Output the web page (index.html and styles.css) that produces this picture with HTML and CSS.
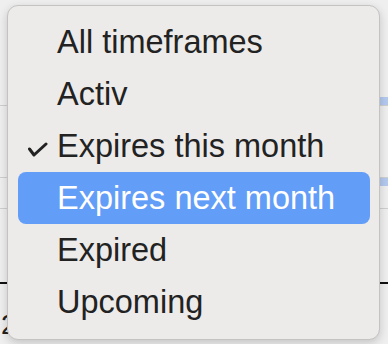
FILE: index.html
```html
<!DOCTYPE html>
<html lang="en">
<head>
    <meta charset="UTF-8">
    <title>Timeframe menu</title>
    <link rel="stylesheet" href="styles.css">
</head>
<body>
<div class="page">
    <div class="gap g1"></div>
    <div class="band"><span class="mark"></span></div>
    <div class="rule"></div>
    <div class="gap g2"></div>
    <div class="band b2"><span class="mark"></span></div>
    <div class="gap g3"></div>
    <div class="rule"></div>
    <div class="gap g4"></div>
    <div class="rule dark"></div>
    <div class="num">2</div>
</div>

<ul class="menu">
    <li class="item"><span class="slot"></span>All timeframes</li>
    <li class="item"><span class="slot"></span>Activ</li>
    <li class="item"><span class="slot"><svg class="check" width="20" height="15" viewBox="0 0 20 15"><path d="M1.5 7 L6 13 L18 2" fill="none" stroke="#222" stroke-width="3" stroke-linecap="round" stroke-linejoin="round"/></svg></span>Expires this month</li>
    <li class="item hover"><span class="slot"></span>Expires next month</li>
    <li class="item"><span class="slot"></span>Expired</li>
    <li class="item"><span class="slot"></span>Upcoming</li>
</ul>
</body>
</html>
```

FILE: styles.css
```css
body,div,ul,li{margin:0;padding:0;}
ul{list-style-type:none;}
body{background:#efefef;font-family:"Liberation Sans",Arial,sans-serif;overflow:hidden;}
.page{position:relative;width:388px;height:344px;}
.gap{height:10px;}
.g1{height:97px;}
.g2{height:71px;}
.g3{height:22px;}
.g4{height:73px;}
.band{height:8px;display:flex;justify-content:flex-end;}
.band .mark{width:40px;background:#b3c9ee;}
.b2{border-top:1px solid #cfcfcf;}
.rule{height:1px;background:#cfcfcf;}
.rule.dark{height:2px;background:#111;}
.num{font-size:28px;line-height:28px;color:#222;margin-top:27px;margin-left:1px;}

.menu{position:absolute;left:7px;top:5px;width:371px;height:314px;padding:10px 0 9px;background:#ecebe9;border:1px solid #c4c3c2;border-radius:11px;box-shadow:0 3px 10px rgba(0,0,0,0.18);}
.item{display:flex;align-items:center;height:52px;margin:0 9px 0 10px;font-size:32.5px;line-height:52px;color:#222;border-radius:8px;white-space:nowrap;}
.slot{width:39px;height:52px;display:flex;align-items:center;flex-shrink:0;padding-left:10px;box-sizing:border-box;}
.check{margin-top:6px;}
.item.hover{background:#629df7;color:#fff;}
```
